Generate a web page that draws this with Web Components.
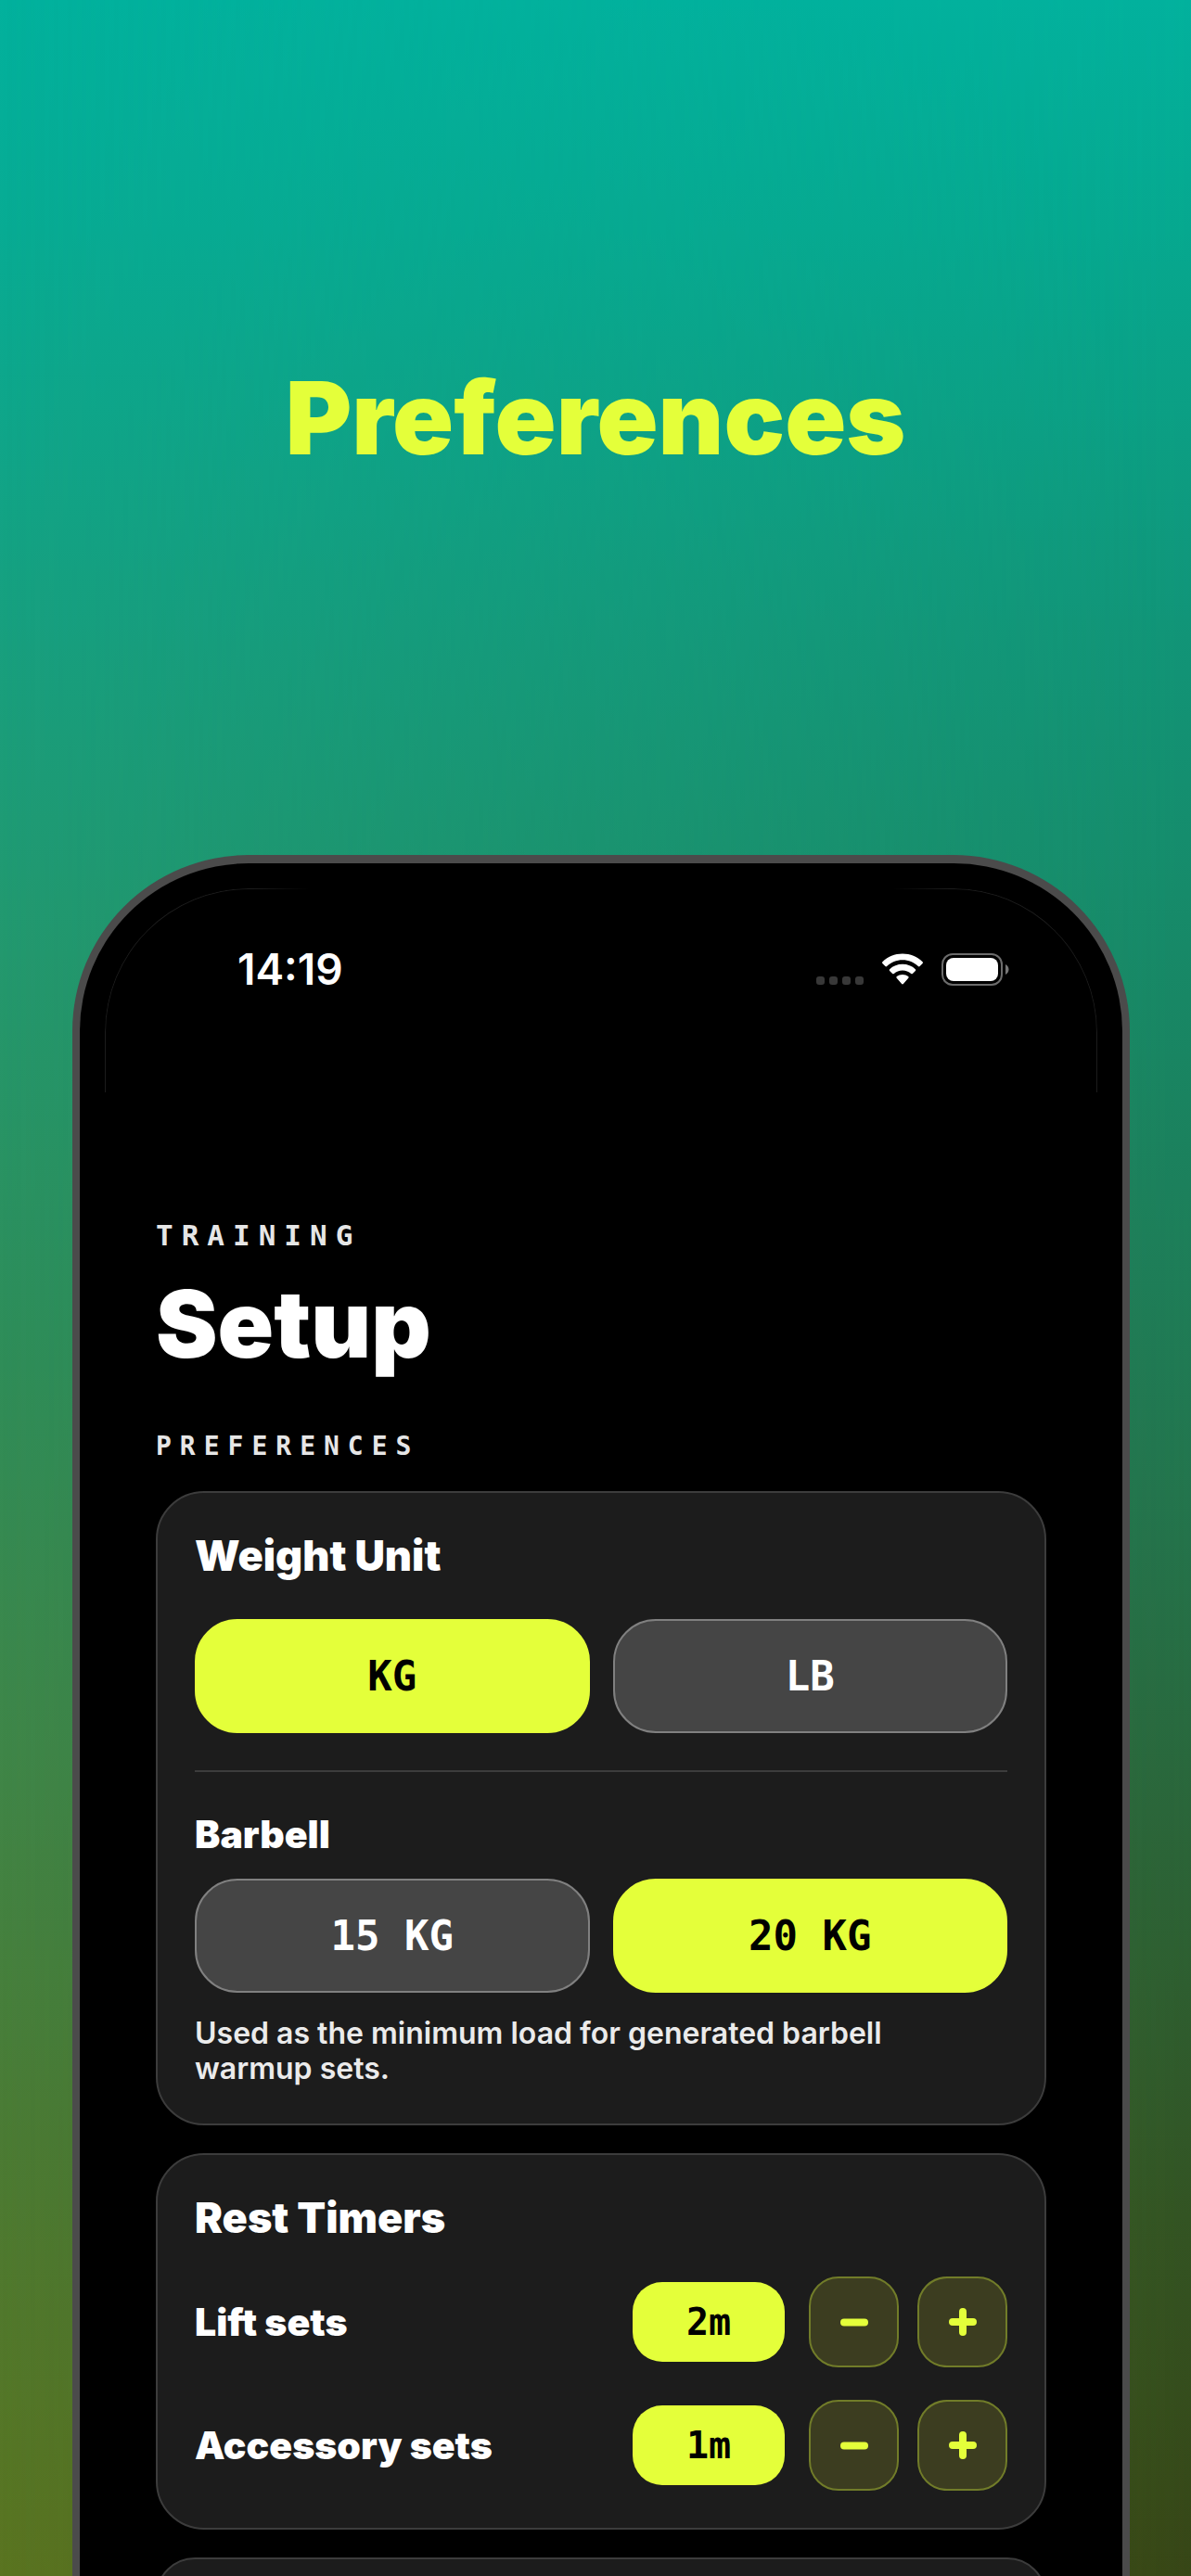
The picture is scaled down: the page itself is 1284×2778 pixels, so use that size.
<!DOCTYPE html>
<html lang="en">
<head>
<meta charset="utf-8">
<meta name="viewport" content="width=device-width, initial-scale=1">
<title>Preferences</title>
<style>
  :root {
    --lime: #e4ff3a;
    --card: #1c1c1c;
    --line: #3c3c3c;
    --sans: Inter, "Liberation Sans", sans-serif;
    --mono: "DejaVu Sans Mono", "Liberation Mono", monospace;
  }
  body {
    margin: 0;
    background: #000;
    color: #fff;
    font-family: var(--sans);
  }
</style>
</head>
<body>
<promo-page>
  <span slot="title">Preferences</span>
  <phone-frame>
    <status-bar slot="status" time="14:19"></status-bar>
    <screen-header eyebrow="Training" heading="Setup"></screen-header>
    <section-label>Preferences</section-label>
    <pref-cards>
      <pref-card heading="Weight Unit">
        <choice-group label="Weight Unit" options="KG,LB" selected="KG"></choice-group>
        <card-divider></card-divider>
        <choice-group label="Barbell" options="15 KG,20 KG" selected="20 KG" titled>Used as the minimum load for generated barbell warmup sets.</choice-group>
      </pref-card>
      <pref-card heading="Rest Timers" class="timers">
        <timer-row minutes="2">Lift sets</timer-row>
        <timer-row minutes="1">Accessory sets</timer-row>
      </pref-card>
      <pref-card></pref-card>
    </pref-cards>
  </phone-frame>
</promo-page>

<script>
'use strict';

(function() {
  // page background, title and room for the device
  class PromoPage extends HTMLElement {
    constructor() {
      super();
      const shadow = this.attachShadow({ mode: 'open' });
      shadow.innerHTML = `
        <style>
          :host {
            display: flex;
            flex-direction: column;
            height: 100vh;
            overflow: hidden;
            position: relative;
            z-index: 0;
            background: linear-gradient(#02b19d 0%, #08ab93 9%, #189f7e 25%, #23986e 37%, #2f8d58 53%, #3f8648 68%, #4b7b34 83%, #5a7420 100%);
          }
          /* darker right side, faded in from the left */
          :host::before {
            content: "";
            position: absolute;
            inset: 0;
            z-index: -1;
            background: linear-gradient(#02b19d 0%, #06a88f 9%, #119578 24%, #198562 41%, #23744d 58%, #2b6337 72%, #335423 86%, #374616 100%);
            -webkit-mask-image: linear-gradient(to right, transparent, #000);
            mask-image: linear-gradient(to right, transparent, #000);
          }
          header {
            flex: none;
            padding: 384px 40px 406px;
            text-align: center;
          }
          h1 {
            margin: 0;
            color: var(--lime);
            font-size: 109px;
            font-weight: 900;
            line-height: 132px;
          }
          main {
            display: flex;
            flex: 1;
            min-height: 0;
            padding: 0 66px 0 78px;
          }
        </style>
        <header><h1><slot name="title"></slot></h1></header>
        <main><slot></slot></main>
      `;
    }
  }

  class PhoneFrame extends HTMLElement {
    constructor() {
      super();
      const shadow = this.attachShadow({ mode: 'open' });
      shadow.innerHTML = `
        <style>
          :host {
            display: block;
            box-sizing: border-box;
            flex: 1;
            position: relative;
            overflow: hidden;
            border: 8px solid #4b4b4b;
            border-top-width: 9px;
            border-bottom: 0;
            border-radius: 190px 190px 0 0;
            background: #000;
          }
          /* faint edge of the glass, only seen round the corners */
          .edge {
            position: absolute;
            inset: 27px 27px auto;
            box-sizing: border-box;
            height: 220px;
            border: 1px solid #1c1c1c;
            border-bottom: 0;
            border-radius: 155px 155px 0 0;
            -webkit-mask-image: linear-gradient(to right, #000 160px, transparent 220px, transparent calc(100% - 220px), #000 calc(100% - 160px));
            mask-image: linear-gradient(to right, #000 160px, transparent 220px, transparent calc(100% - 220px), #000 calc(100% - 160px));
          }
          .content { padding: 240px 82px 0; }
        </style>
        <div class="edge"></div>
        <slot name="status"></slot>
        <div class="content"><slot></slot></div>
      `;
    }
  }

  class StatusBar extends HTMLElement {
    constructor() {
      super();
      const shadow = this.attachShadow({ mode: 'open' });
      shadow.innerHTML = `
        <style>
          :host {
            display: flex;
            align-items: center;
            justify-content: space-between;
            padding: 87px 122px 0 170px;
            font-size: 46px;
            font-weight: 600;
            line-height: 54px;
          }
          .icons {
            display: flex;
            align-items: center;
            gap: 20px;
          }
          svg { display: block; }
        </style>
        <time>${this.getAttribute('time')}</time>
        <div class="icons">
          <svg width="51" height="34" viewBox="0 0 51 34" fill="#383838" aria-hidden="true">
            <rect x="0" y="25" width="9" height="9" rx="3"/>
            <rect x="14" y="25" width="9" height="9" rx="3"/>
            <rect x="28" y="25" width="9" height="9" rx="3"/>
            <rect x="42" y="25" width="9" height="9" rx="3"/>
          </svg>
          <svg width="44" height="34" viewBox="0 0 44 34" fill="#fff" aria-hidden="true">
            <path d="M22 0.5C30.4 0.5 38 3.8 43.6 9.2C44.1 9.7 44.1 10.4 43.6 10.9L40.6 14C40.1 14.5 39.4 14.5 38.9 14C34.4 9.8 28.5 7.3 22 7.3C15.5 7.3 9.6 9.8 5.1 14C4.6 14.5 3.9 14.5 3.4 14L0.4 10.9C-0.1 10.4 -0.1 9.7 0.4 9.2C6 3.8 13.6 0.5 22 0.5Z"/>
            <path d="M22 11.8C27.4 11.8 32.2 13.8 35.9 17.2C36.4 17.7 36.4 18.4 35.9 18.9L32.9 21.9C32.4 22.4 31.7 22.4 31.2 22C28.7 19.8 25.5 18.6 22 18.6C18.5 18.6 15.3 19.8 12.8 22C12.3 22.4 11.6 22.4 11.1 21.9L8.1 18.9C7.6 18.4 7.6 17.7 8.1 17.2C11.8 13.8 16.6 11.8 22 11.8Z"/>
            <path d="M22 23C24.4 23 26.5 23.8 28.2 25.1C28.8 25.6 28.8 26.3 28.3 26.8L22.9 33.1C22.4 33.7 21.6 33.7 21.1 33.1L15.7 26.8C15.2 26.3 15.2 25.6 15.8 25.1C17.5 23.8 19.6 23 22 23Z"/>
          </svg>
          <svg width="73" height="35" viewBox="0 0 73 35" aria-hidden="true">
            <rect x="1" y="1" width="64" height="33" rx="11" fill="none" stroke="#6c6c6c" stroke-width="2"/>
            <rect x="5" y="5" width="56" height="25" rx="8" fill="#fff"/>
            <path d="M69 12C71.200 13 72.500 15 72.500 17.500C72.500 20 71.200 22 69 23Z" fill="#777"/>
          </svg>
        </div>
      `;
    }
  }

  class ScreenHeader extends HTMLElement {
    constructor() {
      super();
      const shadow = this.attachShadow({ mode: 'open' });
      shadow.innerHTML = `
        <style>
          :host { display: block; }
          p {
            margin: 0 0 16px;
            color: #e6e6e6;
            font: bold 31px/40px var(--mono);
            letter-spacing: 9px;
            text-transform: uppercase;
          }
          h2 {
            margin: 0;
            font-size: 100px;
            font-weight: 900;
            line-height: 120px;
          }
        </style>
        <p>${this.getAttribute('eyebrow')}</p>
        <h2>${this.getAttribute('heading')}</h2>
      `;
    }
  }

  class SectionLabel extends HTMLElement {
    constructor() {
      super();
      const shadow = this.attachShadow({ mode: 'open' });
      shadow.innerHTML = `
        <style>
          :host { display: block; padding: 54px 0 30px; }
          h3 {
            margin: 0;
            color: #e6e6e6;
            font: bold 28px/36px var(--mono);
            letter-spacing: 9px;
            text-transform: uppercase;
          }
        </style>
        <h3><slot></slot></h3>
      `;
    }
  }

  class PrefCards extends HTMLElement {
    constructor() {
      super();
      const shadow = this.attachShadow({ mode: 'open' });
      shadow.innerHTML = `
        <style>
          :host { display: flex; flex-direction: column; gap: 30px; }
        </style>
        <slot></slot>
      `;
    }
  }

  class PrefCard extends HTMLElement {
    constructor() {
      super();
      const shadow = this.attachShadow({ mode: 'open' });
      const heading = this.getAttribute('heading');
      shadow.innerHTML = `
        <style>
          :host {
            display: flex;
            flex-direction: column;
            gap: 40px;
            padding: 40px;
            border: 2px solid var(--line);
            border-radius: 52px;
            background: var(--card);
          }
          :host(.timers) { gap: 35px; }
          h4 {
            margin: 0;
            font-size: 45px;
            font-weight: 900;
            line-height: 56px;
          }
        </style>
        ${heading ? `<h4>${heading}</h4>` : ''}
        <slot></slot>
      `;
    }
  }

  class CardDivider extends HTMLElement {
    constructor() {
      super();
      const shadow = this.attachShadow({ mode: 'open' });
      shadow.innerHTML = `
        <style>
          :host { display: block; padding-bottom: 3px; }
          hr { margin: 0; border: 0; height: 2px; background: var(--line); }
        </style>
        <hr>
      `;
    }
  }

  class ChoiceGroup extends HTMLElement {
    constructor() {
      super();
      const shadow = this.attachShadow({ mode: 'open' });
      const label = this.getAttribute('label');
      const selected = this.getAttribute('selected');
      const titled = this.hasAttribute('titled');
      const buttons = this.getAttribute('options').split(',').map(option =>
        `<button type="button" aria-pressed="${option === selected}">${option}</button>`
      ).join('');
      shadow.innerHTML = `
        <style>
          :host { display: flex; flex-direction: column; gap: 24px; }
          h5 {
            margin: 0;
            font-size: 41px;
            font-weight: 900;
            line-height: 48px;
          }
          .options { display: flex; gap: 25px; }
          button {
            flex: 1;
            height: 123px;
            padding: 0;
            border: 2px solid #808080;
            border-radius: 46px;
            background: #454545;
            color: #fff;
            font: bold 44px/48px var(--mono);
          }
          button[aria-pressed="true"] {
            border-color: var(--lime);
            background: var(--lime);
            color: #000;
          }
          p {
            margin: 0;
            padding: 1px 40px 0 0;
            color: #ebebeb;
            font-size: 32px;
            font-weight: 600;
            line-height: 38px;
          }
        </style>
        ${titled ? `<h5>${label}</h5>` : ''}
        <div class="options" role="group" aria-label="${label}">${buttons}</div>
        ${titled ? '<p><slot></slot></p>' : ''}
      `;
      shadow.querySelector('.options').addEventListener('click', e => {
        const pressed = e.target.closest('button');
        if (!pressed) return;
        shadow.querySelectorAll('button').forEach(b => b.setAttribute('aria-pressed', b === pressed));
      });
    }
  }

  class TimerRow extends HTMLElement {
    constructor() {
      super();
      const shadow = this.attachShadow({ mode: 'open' });
      let minutes = Number(this.getAttribute('minutes'));
      shadow.innerHTML = `
        <style>
          :host { display: flex; align-items: center; }
          .label {
            flex: 1;
            font-size: 41px;
            font-weight: 900;
            line-height: 48px;
          }
          output {
            width: 164px;
            margin-right: 26px;
            border-radius: 32px;
            background: var(--lime);
            color: #000;
            font: bold 40px/86px var(--mono);
            text-align: center;
          }
          .steps { display: flex; gap: 20px; }
          button {
            display: flex;
            align-items: center;
            justify-content: center;
            width: 97px;
            height: 98px;
            padding: 0;
            border: 2px solid #717c29;
            border-radius: 32px;
            background: #3c3d20;
            color: var(--lime);
          }
          svg { display: block; }
        </style>
        <span class="label" id="label"><slot></slot></span>
        <output aria-labelledby="label">${minutes}m</output>
        <div class="steps">
          <button type="button" aria-label="Decrease">
            <svg width="32" height="32" viewBox="0 0 32 32" stroke="currentColor" stroke-width="8" stroke-linecap="round"><path d="M5 16.500H27"/></svg>
          </button>
          <button type="button" aria-label="Increase">
            <svg width="32" height="32" viewBox="0 0 32 32" stroke="currentColor" stroke-width="8" stroke-linecap="round"><path d="M5 16H27M16 5V27"/></svg>
          </button>
        </div>
      `;
      const output = shadow.querySelector('output');
      const [minus, plus] = shadow.querySelectorAll('button');
      minus.addEventListener('click', () => {
        minutes = Math.max(0, minutes - 1);
        output.textContent = `${minutes}m`;
      });
      plus.addEventListener('click', () => {
        minutes += 1;
        output.textContent = `${minutes}m`;
      });
    }
  }

  customElements.define('promo-page', PromoPage);
  customElements.define('phone-frame', PhoneFrame);
  customElements.define('status-bar', StatusBar);
  customElements.define('screen-header', ScreenHeader);
  customElements.define('section-label', SectionLabel);
  customElements.define('pref-cards', PrefCards);
  customElements.define('pref-card', PrefCard);
  customElements.define('card-divider', CardDivider);
  customElements.define('choice-group', ChoiceGroup);
  customElements.define('timer-row', TimerRow);
})();
</script>
</body>
</html>
